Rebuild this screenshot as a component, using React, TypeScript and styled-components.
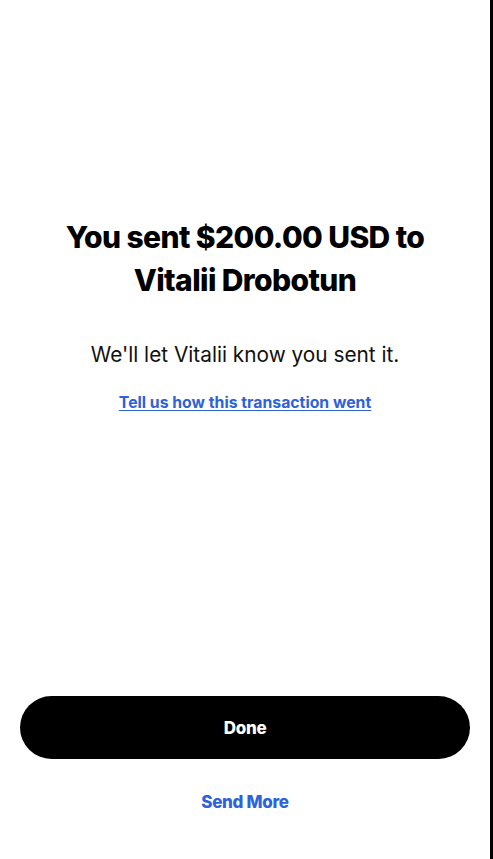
import React from "react";
import styled, { createGlobalStyle } from "styled-components";

const GlobalStyle = createGlobalStyle`
	html, body {
		margin: 0;
		padding: 0;
		background: #ffffff;
	}
	body {
		font-family: Inter, "Noto Sans", sans-serif;
		-webkit-font-smoothing: antialiased;
	}
`;

const Screen = styled.div`
	box-sizing: border-box;
	height: 859px;
	display: flex;
	flex-direction: column;
	background: #ffffff;
	border-right: 3px solid #000000;
	overflow: hidden;
`;

const Main = styled.main`
	flex: 1;
	display: flex;
	flex-direction: column;
	align-items: center;
	padding: 216px 24px 0;
	text-align: center;
`;

const Title = styled.h1`
	margin: 0;
	font-family: Inter, "Noto Sans", sans-serif;
	font-weight: 800;
	font-size: 30px;
	line-height: 43px;
	letter-spacing: -0.6px;
	color: #000000;
`;

const Message = styled.p`
	margin: 40px 0 0;
	font-size: 20.8px;
	line-height: 26px;
	font-weight: 400;
	color: #111111;
`;

const FeedbackLink = styled.a`
	margin-top: 25px;
	font-size: 15.8px;
	line-height: 20px;
	font-weight: 700;
	color: #2e62d9;
	text-decoration: underline;
	text-underline-offset: 2px;
	cursor: pointer;
`;

const Footer = styled.footer`
	display: flex;
	flex-direction: column;
	align-items: center;
	padding: 0 20px 45px;
`;

const PrimaryButton = styled.button`
	width: 100%;
	height: 63px;
	border: none;
	border-radius: 32px;
	background: #000000;
	color: #ffffff;
	font-family: Inter, "Noto Sans", sans-serif;
	font-size: 17px;
	font-weight: 800;
	letter-spacing: -0.3px;
	cursor: pointer;
`;

const TextButton = styled.button`
	margin-top: 31px;
	border: none;
	background: none;
	padding: 0;
	color: #2e62d9;
	font-family: Inter, "Noto Sans", sans-serif;
	font-size: 17px;
	line-height: 24px;
	font-weight: 800;
	letter-spacing: -0.3px;
	cursor: pointer;
`;

export default function App() {
	return (
		<>
			<GlobalStyle />
			<Screen>
				<Main>
					<Title>
						You sent $200.00 USD to
						<br />
						Vitalii Drobotun
					</Title>
					<Message>We'll let Vitalii know you sent it.</Message>
					<FeedbackLink>Tell us how this transaction went</FeedbackLink>
				</Main>
				<Footer>
					<PrimaryButton>Done</PrimaryButton>
					<TextButton>Send More</TextButton>
				</Footer>
			</Screen>
		</>
	);
}
